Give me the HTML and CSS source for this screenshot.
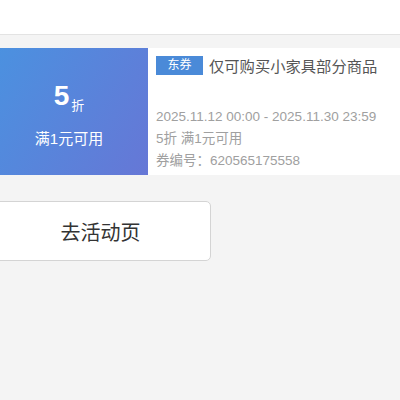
FILE: index.html
```html
<!DOCTYPE html>
<html lang="zh-CN">

<head>
    <meta charset="UTF-8">
    <title>优惠券</title>
    <link rel="stylesheet" href="styles.css">
</head>

<body>
    <div class="topbar"></div>
    <div class="page">
        <div class="coupon">
            <div class="coupon-left">
                <div class="discount"><span class="num">5</span><span class="unit">折</span></div>
                <div class="limit">满1元可用</div>
            </div>
            <div class="coupon-right">
                <div class="title-row">
                    <span class="tag">东券</span>
                    <span class="title">仅可购买小家具部分商品</span>
                </div>
                <div class="info">
                    <p>2025.11.12 00:00 - 2025.11.30 23:59</p>
                    <p>5折 满1元可用</p>
                    <p>券编号：620565175558</p>
                </div>
            </div>
        </div>
        <div class="btn-area">
            <button class="go-btn">去活动页</button>
        </div>
    </div>
</body>

</html>
```

FILE: styles.css
```css
body {
    margin: 0;
    font-family: "Liberation Sans", "Noto Sans CJK SC", sans-serif;
    background-color: #f4f4f4;
    overflow: hidden;
}

/* 顶部白条 */
.topbar {
    height: 34px;
    background-color: #fff;
    border-bottom: 1px solid #e3e3e3;
}

.page {
    margin-left: -10px;
    padding-top: 13px;
}

.coupon {
    display: flex;
    height: 127px;
    background-color: #fff;
}

.coupon-left {
    width: 158px;
    background: linear-gradient(120deg, #4a92e0, #6677d6);
    color: #fff;
    display: flex;
    flex-direction: column;
    align-items: center;
    justify-content: center;
}

.discount {
    height: 30px;
    margin-top: 4px;
}

.discount .num {
    font-size: 28px;
    font-weight: bold;
}

.discount .unit {
    font-size: 13px;
    margin-left: 2px;
    vertical-align: -5px;
}

.limit {
    font-size: 15px;
    margin-top: 17px;
}

.coupon-right {
    flex: 1;
    padding: 6px 0 0 8px;
}

.title-row {
    display: flex;
    align-items: center;
    gap: 6px;
}

.tag {
    background-color: #4a8ad8;
    color: #fff;
    font-size: 12px;
    line-height: 19px;
    width: 47px;
    text-align: center;
}

.title {
    font-size: 15.3px;
    color: #555;
}

.info {
    margin-top: 30px;
    color: #a0a0a0;
    font-size: 13.5px;
}

.info p {
    margin: 0;
    line-height: 22px;
}

.btn-area {
    padding-top: 26px;
}

.go-btn {
    width: 221px;
    height: 60px;
    background-color: #fff;
    border: 1px solid #d4d4d4;
    border-radius: 5px;
    font-family: "Liberation Sans", "Noto Sans CJK SC", sans-serif;
    font-size: 20px;
    color: #333;
}
```
